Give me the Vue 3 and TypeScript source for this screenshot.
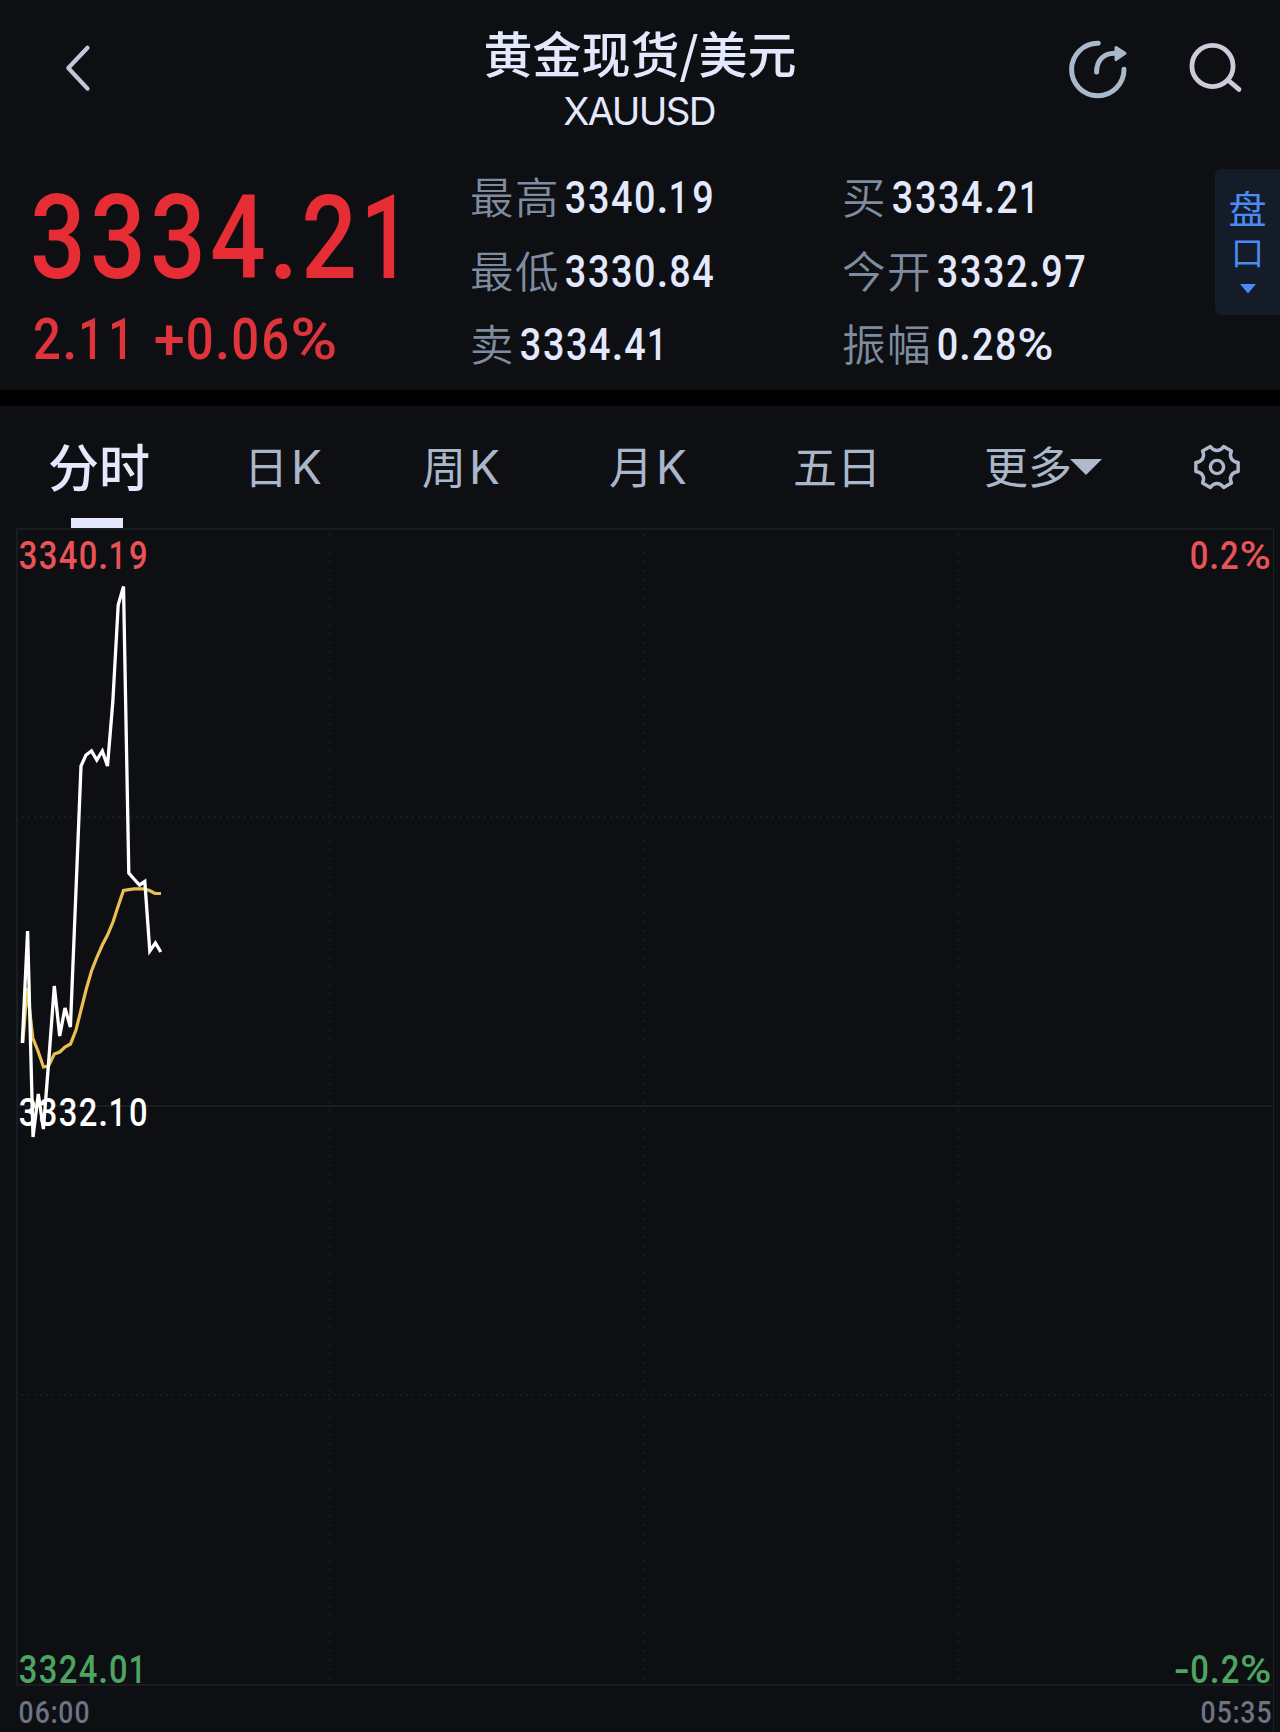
<script setup lang="ts">
import { h } from 'vue'

interface FigureProps {
  text: string
  pitch: number
  size: number
  weight?: number
}

/* Cell width of each non-digit glyph, relative to one digit */
const cells: Record<string, number> = {
  '.': 0.52, ':': 0.45, '%': 1.57, '+': 1.03, '-': 0.78, ' ': 0.54,
}

/* How far a glyph is inset in its cell, and how much of the cell it fills */
const fit = (ch: string): [number, number] => {
  if (ch === '1') return [0.02, 0.85]
  return /\d/.test(ch) ? [0.035, 0.93] : [0, 1]
}

/* Figures set on a fixed digit pitch */
const Figure = (p: FigureProps) => {
  let x = 0
  const glyphs = [...p.text].map((ch) => {
    const w = (cells[ch] ?? 1) * p.pitch
    const [inset, fill] = fit(ch)
    const node = h('tspan', {
      x: (x + w * inset).toFixed(2),
      textLength: (w * fill).toFixed(2),
      lengthAdjust: 'spacingAndGlyphs',
    }, ch)
    x += w
    return node
  })
  const height = Math.round(p.size)
  return h('svg', { width: x.toFixed(1), height, style: { display: 'block', overflow: 'visible', flex: 'none' } }, [
    h('text', {
      y: height,
      fill: 'currentColor',
      'font-size': p.size,
      'font-weight': p.weight ?? 500,
      'font-family': 'Roboto, sans-serif',
      style: { whiteSpace: 'pre' },
    }, glyphs),
  ])
}
Figure.props = ['text', 'pitch', 'size', 'weight']

const quotes = [
  { label: '最高', value: '3340.19' },
  { label: '买', value: '3334.21' },
  { label: '最低', value: '3330.84' },
  { label: '今开', value: '3332.97' },
  { label: '卖', value: '3334.41' },
  { label: '振幅', value: '0.28%' },
]

const tabs = [
  { name: '分时', unit: '', cls: 'active' },
  { name: '日', unit: 'K', cls: 'day' },
  { name: '周', unit: 'K', cls: 'week' },
  { name: '月', unit: 'K', cls: 'month' },
  { name: '五日', unit: '', cls: 'five' },
  { name: '更多', unit: '', cls: 'more' },
]

const price: [number, number][] = [
  [22.3, 1043], [27.6, 931], [33, 1137], [38.3, 1094], [43.4, 1129], [48.8, 1060], [54.3, 986], [59.7, 1036],
  [65, 1008], [70.4, 1027], [76, 890], [81, 766], [86, 755], [91.5, 751], [96.8, 760], [102.3, 751],
  [107.5, 766], [112.8, 702], [118.2, 605], [123.5, 586.5], [128.8, 873], [134, 879], [139.5, 885],
  [144.8, 881.5], [149.8, 951], [155.4, 943], [160.8, 952],
]
const average: [number, number][] = [
  [22.8, 1043], [27.2, 988], [32.8, 1038], [38, 1051], [43.5, 1067], [48.5, 1066], [54.3, 1054], [59.7, 1052],
  [65, 1047], [70.5, 1044], [76, 1030], [81, 1010], [86.3, 989], [91.5, 971], [97, 957], [102.3, 945],
  [107.5, 935], [113, 922], [118.2, 906], [123.5, 890.5], [134, 888.8], [144, 888.8], [149.5, 890.5],
  [155, 893.5], [161, 893.5],
]
const pts = (a: [number, number][]) => a.map((p) => p.join(',')).join(' ')

/* Six-lobed gear outline around the origin */
const polar = (deg: number, r: number) => {
  const a = (deg * Math.PI) / 180
  return `${(Math.cos(a) * r).toFixed(2)} ${(Math.sin(a) * r).toFixed(2)}`
}
let gear = ''
for (let k = 0; k < 6; k++) {
  const d = k * 60
  gear += `${k ? 'L' : 'M'}${polar(d - 12, 21.6)}L${polar(d + 12, 21.6)}`
  gear += `C${polar(d + 19, 15.5)} ${polar(d + 41, 15.5)} ${polar(d + 48, 21.6)}`
}
gear += 'Z'
</script>

<template>
  <div class="page">
    <header class="top">
      <svg class="back" width="40" height="60" viewBox="0 0 40 60">
        <path d="M27.5 7.8 8.3 28 27.5 48.6" fill="none" stroke="#c5c6da" stroke-width="4.2" stroke-linecap="round" stroke-linejoin="round" />
      </svg>
      <div class="title">
        <h1>黄金现货/美元</h1>
        <p>XAUUSD</p>
      </div>
      <div class="actions">
        <svg width="64" height="64" viewBox="0 0 64 64" fill="none" stroke="#a9b8cb" stroke-width="5" stroke-linecap="round">
          <path d="M32.3 5.3A26.2 26.2 0 1 0 58 31.3" />
          <path d="M30.6 34C30.6 23 37 15 49 15.2" />
          <path d="M50 9.4 59 15.2 50 21.6Z" fill="#a9b8cb" stroke-width="3" stroke-linejoin="round" />
        </svg>
        <svg width="60" height="60" viewBox="0 0 60 60" fill="none" stroke="#cdcada" stroke-width="4.8">
          <circle cx="26.5" cy="28" r="20.6" />
          <path d="M42.5 42.5 53 51.4" stroke-linecap="round" />
        </svg>
      </div>
    </header>

    <section class="quote">
      <div class="last">
        <Figure class="big" text="3334.21" :pitch="60" :size="117" :weight="500" />
        <Figure class="change" text="2.11 +0.06%" :pitch="30" :size="57.5" :weight="500" />
      </div>
      <dl class="grid">
        <div v-for="q in quotes" :key="q.label" class="cell">
          <dt>{{ q.label }}</dt>
          <dd><Figure :text="q.value" :pitch="23.1" :size="44" /></dd>
        </div>
      </dl>
      <aside class="book">
        <span>盘</span>
        <span class="mouth">口</span>
        <svg width="16" height="10" viewBox="0 0 16 10"><path d="M0 0H16L8 9.5Z" fill="#4c8bf2" /></svg>
      </aside>
    </section>

    <nav class="tabs">
      <span v-for="t in tabs" :key="t.cls" class="tab" :class="t.cls">{{ t.name }}<b v-if="t.unit">{{ t.unit }}</b></span>
      <svg class="caret" width="32" height="16" viewBox="0 0 32 16"><path d="M0 0H32L16 16Z" fill="#b1bacd" /></svg>
      <svg class="gear" width="50" height="50" viewBox="-25 -25 50 50" fill="none" stroke="#aeb8cd" stroke-width="3.4" stroke-linejoin="round">
        <path :d="gear" />
        <circle r="6.6" />
      </svg>
    </nav>

    <main class="chart">
      <svg class="plot" width="1280" height="1204" viewBox="0 528 1280 1204" fill="none">
        <g stroke="#191c20" stroke-width="2">
          <path d="M1272 529H17V1685H1272" stroke-linejoin="round" />
          <path d="M17 1106H1272" />
          <path d="M330 534V1684M644 534V1684M958 534V1684" stroke-dasharray="2 7" />
          <path d="M22 817H1272M22 1395H1272" stroke-dasharray="2 4" />
        </g>
        <path d="M1273.5 528V1732" stroke="#1b2329" />
        <polyline :points="pts(average)" stroke="#eabf54" stroke-width="3.2" />
        <polyline :points="pts(price)" stroke="#fff" stroke-width="3.3" />
      </svg>
      <div class="row red"><Figure text="3340.19" :pitch="20" :size="39" /><Figure text="0.2%" :pitch="20" :size="39" /></div>
      <div class="row mid"><Figure text="3332.10" :pitch="20" :size="39" /></div>
      <div class="row green"><Figure text="3324.01" :pitch="20" :size="39" /><Figure text="-0.2%" :pitch="20" :size="39" /></div>
      <div class="row time"><Figure text="06:00" :pitch="16.2" :size="30.5" /><Figure text="05:35" :pitch="16.2" :size="30.5" /></div>
    </main>
  </div>
</template>

<style>
body {
  margin: 0;
  background: #0d0f12;
}
</style>

<style scoped>
.page {
  width: 1280px;
  height: 1732px;
  overflow: hidden;
  background: #0d0f12;
  color: #e3e8fd;
  font-family: 'Noto Sans CJK SC', sans-serif;
}
.top {
  display: grid;
  grid-template-columns: 1fr auto 1fr;
  height: 150px;
}
.back {
  margin: 40px 0 0 60px;
}
.title {
  text-align: center;
  padding-top: 22px;
}
h1 {
  margin: 0;
  font-size: 49px;
  line-height: 60px;
  font-weight: 500;
}
.title p {
  margin: 8px 2px 0 0;
  font: 400 38.5px/42px Inter, sans-serif;
  letter-spacing: -1.7px;
}
.actions {
  display: flex;
  justify-content: flex-end;
  gap: 56px;
  padding: 38px 34px 0 0;
}
.quote {
  display: flex;
  height: 240px;
  border-bottom: 16px solid #000;
}
.last {
  width: 442px;
  padding: 11px 0 0 28px;
  box-sizing: border-box;
  color: #e62c35;
}
.big {
  margin-bottom: 23px;
}
.change {
  margin-left: 4px;
  color: #df343c;
}
.grid {
  display: grid;
  grid-template-columns: 372px 372px;
  grid-auto-rows: 73.5px;
  margin: 11px 0 0 28px;
  width: 745px;
}
.cell {
  display: flex;
  align-items: flex-start;
}
dt {
  font-size: 43.5px;
  font-weight: 350;
  letter-spacing: 1.5px;
  line-height: 69px;
  color: #7f8ca0;
}
dd {
  margin: 8px 0 0 3.5px;
}
.book {
  display: flex;
  flex-direction: column;
  align-items: center;
  width: 65px;
  height: 146px;
  margin-top: 19px;
  box-sizing: border-box;
  padding: 16px 0 0;
  border-radius: 6px 0 0 6px;
  background: #141b29;
  color: #4c8bf2;
  font-size: 38px;
  font-weight: 400;
  line-height: 43px;
}
.book .mouth {
  font-size: 33px;
  line-height: 46px;
}
.book svg {
  margin-top: 10px;
}
.tabs {
  display: flex;
  height: 122px;
  color: #aab6ca;
}
.tab {
  position: relative;
  flex: none;
  white-space: nowrap;
  font-size: 44px;
  font-weight: 400;
  line-height: 118px;
  height: 122px;
}
.tab b {
  margin-left: 3px;
  font: 400 46px/1 Inter, sans-serif;
}
.active {
  width: 196px;
  margin-left: 48px;
  font-size: 51px;
  font-weight: 500;
  color: #e3e8fd;
}
.active::after {
  content: '';
  position: absolute;
  left: 23px;
  bottom: 0;
  width: 52px;
  height: 10px;
  background: #e3e8fd;
}
.day { width: 178px; }
.week { width: 187px; }
.month { width: 184px; }
.five { width: 191px; }
.more { width: 86px; }
.caret {
  margin-top: 53px;
}
.gear {
  margin: 36px 0 0 90px;
}
.chart {
  position: relative;
  height: 1204px;
}
.plot {
  position: absolute;
  left: 0;
  top: 0;
}
.row {
  position: relative;
  display: flex;
  justify-content: space-between;
  padding: 0 9px 0 18px;
}
.red { padding-top: 2px; color: #e95357; }
.mid { padding-top: 518px; color: #fff; }
.green { padding-top: 518px; color: #4ea562; }
.time { padding: 9px 8px 0 18px; color: #6b7485; }
</style>
